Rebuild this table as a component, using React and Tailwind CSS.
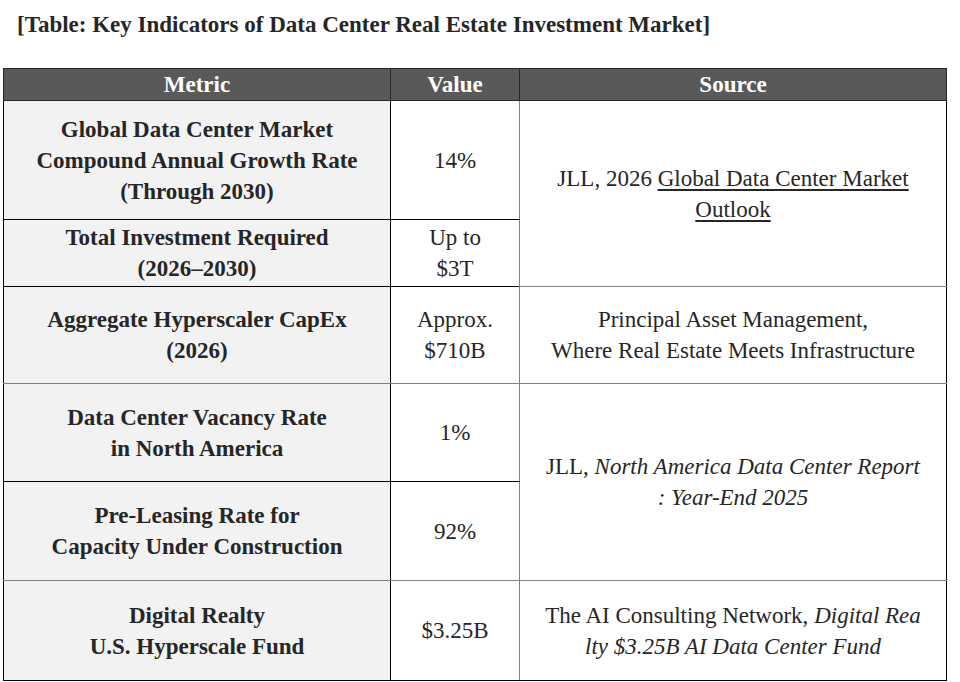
const cell = 'border border-black text-center align-middle text-[23px] leading-[31px] text-[#262626]'
const metric = cell + ' bg-[#f2f2f2] font-bold'
const value = cell + ' border-r-[#808080]'
const src = 'border border-[#808080] border-r-black text-center align-middle text-[23px] leading-[31px] text-[#262626]'
const grayBottom = ' border-b-[#808080]'

export default function App() {
  return (
    <div className="w-[960px] h-[682px] bg-white overflow-hidden font-['Liberation_Serif','Times_New_Roman',serif]">
      <div className="pl-[17px] pt-[9px] h-[68px] text-[23px] font-bold text-[#262626] leading-[32px]">
        [Table: Key Indicators of Data Center Real Estate Investment Market]
      </div>
      <table className="ml-[3px] w-[943px] border-collapse table-fixed">
        <colgroup>
          <col className="w-[387px]" />
          <col className="w-[129px]" />
          <col className="w-[427px]" />
        </colgroup>
        <thead>
          <tr className="h-[32px] bg-[#595959] text-white text-[23px] leading-[30px] font-bold">
            <th className="border border-[#262626] font-bold">Metric</th>
            <th className="border border-[#262626] font-bold">Value</th>
            <th className="border border-[#262626] font-bold">Source</th>
          </tr>
        </thead>
        <tbody>
          <tr className="h-[119px]">
            <td className={metric}>
              Global Data Center Market<br />Compound Annual Growth Rate<br />(Through 2030)
            </td>
            <td className={value}>14%</td>
            <td className={src} rowSpan={2}>
              JLL, 2026 <span className="underline underline-offset-[3px]">Global Data Center Market<br />Outlook</span>
            </td>
          </tr>
          <tr className="h-[67px]">
            <td className={metric}>Total Investment Required<br />(2026–2030)</td>
            <td className={value}>Up to<br />$3T</td>
          </tr>
          <tr className="h-[97px]">
            <td className={metric + grayBottom}>Aggregate Hyperscaler CapEx<br />(2026)</td>
            <td className={value + grayBottom}>Approx.<br />$710B</td>
            <td className={src}>Principal Asset Management,<br />Where Real Estate Meets Infrastructure</td>
          </tr>
          <tr className="h-[98px]">
            <td className={metric}>Data Center Vacancy Rate<br />in North America</td>
            <td className={value}>1%</td>
            <td className={src} rowSpan={2}>
              JLL, <i>North America Data Center Report<br />: Year-End 2025</i>
            </td>
          </tr>
          <tr className="h-[99px]">
            <td className={metric + grayBottom}>Pre-Leasing Rate for<br />Capacity Under Construction</td>
            <td className={value + grayBottom}>92%</td>
          </tr>
          <tr className="h-[100px]">
            <td className={metric}>Digital Realty<br />U.S. Hyperscale Fund</td>
            <td className={value}>$3.25B</td>
            <td className={src + ' border-b-black'}>
              The AI Consulting Network, <i>Digital Rea<br />lty $3.25B AI Data Center Fund</i>
            </td>
          </tr>
        </tbody>
      </table>
    </div>
  )
}
